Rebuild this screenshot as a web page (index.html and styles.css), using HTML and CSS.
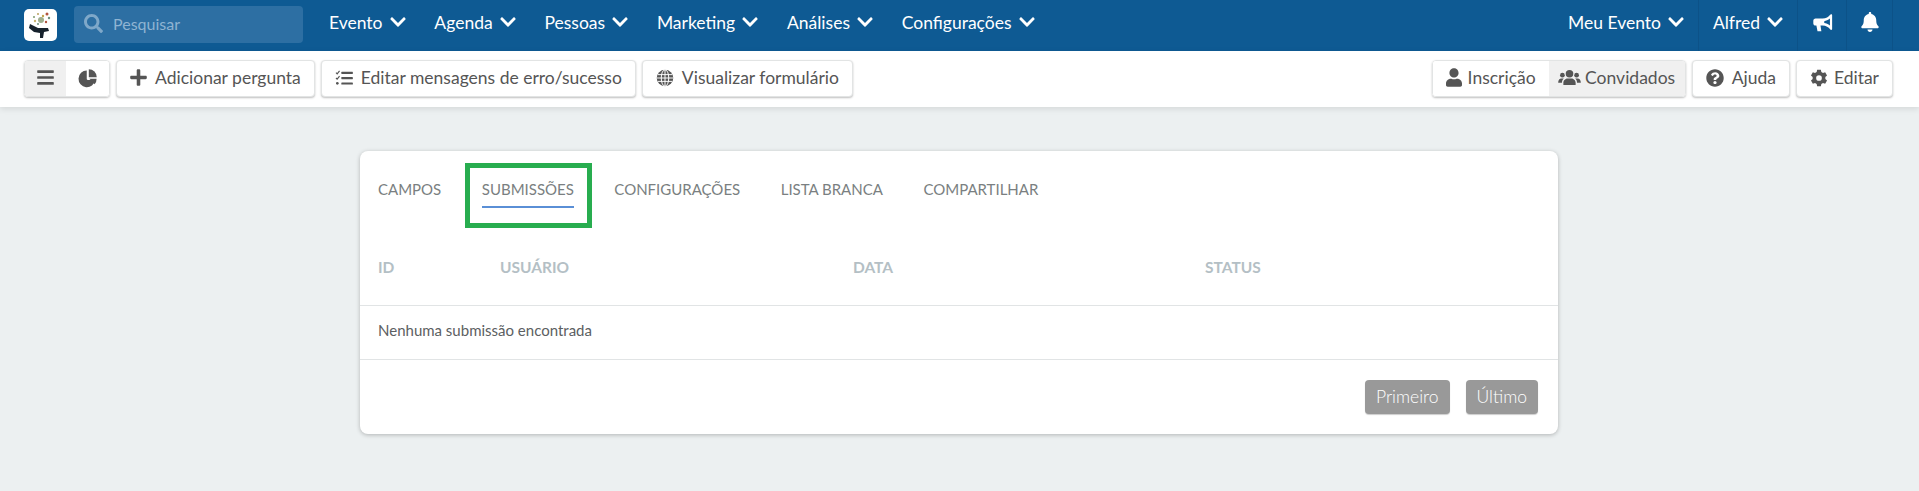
FILE: index.html
```html
<!DOCTYPE html>
<html lang="pt">
<head>
<meta charset="utf-8">
<title>Submissões</title>
<link rel="stylesheet" href="styles.css">
</head>
<body>
<svg class="defs" width="0" height="0" aria-hidden="true">
  <symbol id="chev" viewBox="0 0 448 512"><path d="M207.029 381.476L12.686 187.132c-9.373-9.373-9.373-24.569 0-33.941l22.667-22.667c9.357-9.357 24.522-9.375 33.901-.04L224 284.505l154.745-154.021c9.379-9.335 24.544-9.317 33.901.04l22.667 22.667c9.373 9.373 9.373 24.569 0 33.941L240.971 381.476c-9.373 9.372-24.569 9.372-33.942 0z"/></symbol>
</svg>
<header class="navbar">
  <div class="logo">
    <svg viewBox="0 0 33 32" width="33" height="32">
      <rect width="33" height="32" rx="5" fill="#fff"/>
      <circle cx="14" cy="5" r="1" fill="#b9a15c"/><circle cx="23" cy="5" r="1.5" fill="#b2533f"/><circle cx="10" cy="8" r="1" fill="#7d9a6b"/><circle cx="19" cy="7" r="1.2" fill="#c2a24b"/><circle cx="25" cy="9" r="1.2" fill="#6f8e7a"/><circle cx="11" cy="12" r="1.2" fill="#c9b270"/><circle cx="17" cy="11" r="3" fill="#9fae8e"/><circle cx="22" cy="13" r="1.2" fill="#b2533f"/><circle cx="14" cy="15" r="1" fill="#6f8e7a"/>
      <path d="M6 15l8 4 10 0 1 3-5 1-1 6-3 0 0-5-6-1-5-4z" fill="#16212c"/>
    </svg>
  </div>
  <div class="search">
    <svg class="search-icon" viewBox="0 0 512 512" width="19" height="19"><path d="M505 442.7L405.3 343c-4.5-4.5-10.6-7-17-7H372c27.6-35.3 44-79.7 44-128C416 93.1 322.9 0 208 0S0 93.1 0 208s93.1 208 208 208c48.3 0 92.7-16.4 128-44v16.3c0 6.4 2.5 12.5 7 17l99.7 99.7c9.4 9.4 24.6 9.4 33.9 0l28.3-28.3c9.4-9.4 9.4-24.6.1-34zM208 336c-70.7 0-128-57.2-128-128 0-70.7 57.2-128 128-128 70.7 0 128 57.2 128 128 0 70.7-57.2 128-128 128z"/></svg>
    <span>Pesquisar</span>
  </div>
  <nav class="menu">
    <a class="menu-item">Evento <svg class="chev"><use href="#chev"/></svg></a>
    <a class="menu-item">Agenda <svg class="chev"><use href="#chev"/></svg></a>
    <a class="menu-item">Pessoas <svg class="chev"><use href="#chev"/></svg></a>
    <a class="menu-item">Marketing <svg class="chev"><use href="#chev"/></svg></a>
    <a class="menu-item">Análises <svg class="chev"><use href="#chev"/></svg></a>
    <a class="menu-item">Configurações <svg class="chev"><use href="#chev"/></svg></a>
  </nav>
  <div class="nav-right">
    <a class="right-item w-event">Meu Evento <svg class="chev"><use href="#chev"/></svg></a>
    <a class="right-item w-user">Alfred <svg class="chev"><use href="#chev"/></svg></a>
    <a class="right-item w-horn">
      <svg viewBox="0 0 24 24" width="21" height="21" class="nav-icon"><path d="M22 2.5c-.6 0-1 .3-1.300.7C19 5.500 16 7.500 12 7.500H4c-1.400 0-2.500 1.100-2.500 2.500v3c0 1.400 1.100 2.500 2.500 2.500h1l1.300 6.500h4.400L9.700 15.500H12c4 0 7 2 8.700 4.300.3.400.7.700 1.300.700.800 0 1-.7 1-1.300V3.800c0-.6-.2-1.300-1-1.300zM20.500 15.500C18.500 13.800 16 12.800 14 12.500v-2c2-.3 4.500-1.300 6.500-3z"/></svg>
    </a>
    <a class="right-item w-bell">
      <svg viewBox="0 0 448 512" width="18" height="20" class="nav-icon"><path d="M224 512c35.320 0 63.970-28.650 63.970-64H160.030c0 35.350 28.650 64 63.970 64zm215.390-149.710c-19.320-20.760-55.470-51.990-55.470-154.290 0-77.700-54.480-139.900-127.940-155.160V32c0-17.670-14.320-32-31.980-32s-31.980 14.330-31.980 32v20.840C118.560 68.100 64.080 130.300 64.080 208c0 102.300-36.150 133.530-55.470 154.290-6 6.450-8.660 14.160-8.610 21.710.110 16.400 12.980 32 32.100 32h383.800c19.120 0 32-15.600 32.100-32 .050-7.550-2.610-15.270-8.610-21.710z"/></svg>
    </a>
  </div>
</header>

<div class="toolbar">
  <div class="group">
    <button class="btn btn-icon active">
      <svg viewBox="0 0 448 512" width="17" height="19"><path d="M16 132h416c8.837 0 16-7.163 16-16V76c0-8.837-7.163-16-16-16H16C7.163 60 0 67.163 0 76v40c0 8.837 7.163 16 16 16zm0 160h416c8.837 0 16-7.163 16-16v-40c0-8.837-7.163-16-16-16H16c-8.837 0-16 7.163-16 16v40c0 8.837 7.163 16 16 16zm0 160h416c8.837 0 16-7.163 16-16v-40c0-8.837-7.163-16-16-16H16c-8.837 0-16 7.163-16 16v40c0 8.837 7.163 16 16 16z"/></svg>
    </button>
    <button class="btn btn-icon">
      <svg viewBox="0 0 24 24" width="20" height="20"><path d="M10.500 3A10 10 0 1 0 20.500 14.500h-9l-1-1z"/><path d="M13 1.500v9.500h9.500A9.500 9.500 0 0 0 13 1.500z"/><path d="M13.500 13l6.500 6.500a9.500 9.500 0 0 0 2.300-6.500z"/></svg>
    </button>
  </div>
  <button class="btn single wide-gap">
    <svg viewBox="0 0 448 512" width="17" height="19"><path d="M416 208H272V64c0-17.670-14.330-32-32-32h-32c-17.670 0-32 14.330-32 32v144H32c-17.670 0-32 14.330-32 32v32c0 17.670 14.330 32 32 32h144v144c0 17.670 14.330 32 32 32h32c17.670 0 32-14.330 32-32V304h144c17.670 0 32-14.330 32-32v-32c0-17.670-14.330-32-32-32z"/></svg>
    Adicionar pergunta
  </button>
  <button class="btn single wide-gap">
    <svg viewBox="0 0 20 18" width="18" height="16"><rect x="7" y="2" width="13" height="2.400" rx=".5"/><rect x="7" y="8" width="13" height="2.400" rx=".5"/><rect x="7" y="14" width="13" height="2.400" rx=".5"/><path d="M1 3l1.300 1.300L5 1M1 9l1.300 1.300L5 7" fill="none" stroke="#555" stroke-width="1.300"/><circle cx="2.500" cy="15" r="1.500"/></svg>
    Editar mensagens de erro/sucesso
  </button>
  <button class="btn single wide-gap">
    <svg viewBox="0 0 24 24" width="18" height="18"><circle cx="12" cy="12" r="11"/><path d="M12 1v22M1 12h22M2.500 7.500h19M2.500 16.500h19" stroke="#fff" stroke-width="1.300" fill="none"/><ellipse cx="12" cy="12" rx="5" ry="11" fill="none" stroke="#fff" stroke-width="1.300"/></svg>
    Visualizar formulário
  </button>
  <div class="spacer"></div>
  <div class="group">
    <button class="btn tab-a">
      <svg viewBox="0 0 448 512" width="16" height="19"><path d="M224 256c70.700 0 128-57.300 128-128S294.700 0 224 0 96 57.300 96 128s57.300 128 128 128zm89.600 32h-16.700c-22.200 10.200-46.900 16-72.900 16s-50.600-5.800-72.900-16h-16.700C60.200 288 0 348.200 0 422.400V464c0 26.500 21.500 48 48 48h352c26.500 0 48-21.500 48-48v-41.600c0-74.200-60.200-134.400-134.400-134.400z"/></svg>
      Inscrição
    </button>
    <button class="btn tab-b active">
      <svg viewBox="0 0 24 18" width="23" height="17"><circle cx="12" cy="5" r="4"/><circle cx="4.500" cy="6.500" r="2.500"/><circle cx="19.500" cy="6.500" r="2.500"/><path d="M5.500 17v-2.500C5.500 12 8 10 10 10h4c2 0 4.500 2 4.500 4.500V17zM0 14.500C0 11.500 1.500 10 3.500 10H6c-1.200 1-2 2.700-2 4.500H0zM24 14.500c0-3-1.500-4.500-3.500-4.500H18c1.200 1 2 2.700 2 4.500h4z"/></svg>
      Convidados
    </button>
  </div>
  <button class="btn single wide-gap">
    <svg viewBox="0 0 512 512" width="18" height="18"><path d="M504 256c0 136.997-111.043 248-248 248S8 392.997 8 256C8 119.083 119.043 8 256 8s248 111.083 248 248zM262.655 90c-54.497 0-89.255 22.957-116.549 63.758-3.536 5.286-2.353 12.415 2.715 16.258l34.699 26.310c5.205 3.947 12.621 3.008 16.665-2.122 17.864-22.658 30.113-35.797 57.303-35.797 20.429 0 45.698 13.148 45.698 32.958 0 14.976-12.363 22.667-32.534 33.976C247.128 238.528 216 254.941 216 296v4c0 6.627 5.373 12 12 12h56c6.627 0 12-5.373 12-12v-1.333c0-28.462 83.186-29.647 83.186-106.667 0-58.002-60.165-102-116.531-102zM256 338c-25.365 0-46 20.635-46 46 0 25.364 20.635 46 46 46s46-20.636 46-46c0-25.365-20.635-46-46-46z"/></svg>
    Ajuda
  </button>
  <button class="btn single">
    <svg viewBox="0 0 24 24" width="18" height="18"><path fill-rule="evenodd" d="M9.500 1h5l.6 3a8.500 8.500 0 0 1 2.200 1.300l2.900-1 2.500 4.300-2.300 2a8.500 8.500 0 0 1 0 2.800l2.300 2-2.500 4.300-2.900-1a8.500 8.500 0 0 1-2.200 1.300l-.6 3h-5l-.6-3a8.500 8.500 0 0 1-2.200-1.300l-2.900 1-2.500-4.300 2.300-2a8.500 8.500 0 0 1 0-2.800l-2.300-2 2.500-4.300 2.900 1A8.500 8.500 0 0 1 8.900 4zM12 8.200a3.800 3.800 0 1 0 0 7.600 3.800 3.800 0 0 0 0-7.600z"/></svg>
    Editar
  </button>
</div>

<main class="card">
  <div class="tabs">
    <a class="tab">CAMPOS</a>
    <a class="tab current">SUBMISSÕES<span class="highlight"></span></a>
    <a class="tab">CONFIGURAÇÕES</a>
    <a class="tab">LISTA BRANCA</a>
    <a class="tab">COMPARTILHAR</a>
  </div>
  <div class="thead">
    <div class="th">ID</div>
    <div class="th">USUÁRIO</div>
    <div class="th">DATA</div>
    <div class="th">STATUS</div>
  </div>
  <div class="empty">Nenhuma submissão encontrada</div>
  <div class="pager">
    <button class="page-btn">Primeiro</button>
    <button class="page-btn">Último</button>
  </div>
</main>
</body>
</html>
```
FILE: styles.css
```css
* { box-sizing: border-box; }
html, body { margin: 0; padding: 0; }
body {
  background: #ecf0f1;
  font-family: Lato, "Open Sans", sans-serif;
  color: #555;
  height: 491px;
  overflow: hidden;
}
.defs { position: absolute; }

.navbar {
  height: 51px;
  background: #0e5a93;
  display: flex;
  align-items: center;
  padding-left: 24px;
  color: #fff;
  font-size: 17.5px;
}
.logo { width: 33px; height: 32px; margin-top: -2px; }
.logo svg { display: block; }
.search {
  width: 229px;
  height: 37px;
  margin: -2px 0 0 17px;
  border-radius: 4px;
  background: #2d6fa3;
  display: flex;
  align-items: center;
  gap: 10px;
  padding: 0 0 2px 10px;
  color: #8fb4d2;
  font-size: 16px;
}
.search-icon { fill: #7fa8c9; }
.menu { display: flex; gap: 28.8px; margin-left: 26px; padding-bottom: 7px; }
.menu-item, .right-item { display: flex; align-items: center; gap: 7px; white-space: nowrap; }
.chev { width: 16px; height: 18px; fill: #fff; }
.nav-right { margin-left: auto; display: flex; height: 51px; margin-right: 26px; }
.right-item { justify-content: center; border-right: 1px solid #0c5288; padding-bottom: 7px; }
.w-event { padding-right: 14px; }
.w-user { width: 99px; }
.w-horn { width: 49px; }
.w-bell { width: 46px; }
.nav-icon { fill: #fff; }

.toolbar {
  height: 56px;
  background: #fff;
  display: flex;
  align-items: center;
  gap: 6px;
  padding: 0 26px 2px 24px;
  box-shadow: 0 2px 6px rgba(0, 0, 0, .1);
}
.spacer { flex: 1; }
.group {
  display: flex;
  height: 37px;
  border: 1px solid #e2e4e4;
  border-radius: 4px;
  box-shadow: 0 1px 2px rgba(0, 0, 0, .25);
  overflow: hidden;
}
.btn {
  height: 37px;
  background: #fff;
  border: 0;
  font-family: inherit;
  font-size: 17.5px;
  color: #555;
  display: flex;
  align-items: center;
  gap: 6px;
  white-space: nowrap;
  padding: 0 0 1px;
}
.btn svg { fill: #555; flex: none; }
.group .btn { height: 35px; }
.btn.active { background: #f0f0f0; }
.btn-icon { width: 42px; justify-content: center; }
.btn-icon.active { border-right: 1px solid #fff; }
.tab-a { width: 116px; justify-content: center; }
.tab-b { width: 136px; justify-content: center; gap: 4px; }
.single {
  padding: 0 13px 1px;
  border: 1px solid #e2e4e4;
  border-radius: 4px;
  box-shadow: 0 1px 2px rgba(0, 0, 0, .25);
}
.wide-gap { gap: 8px; }

.card {
  width: 1198px;
  height: 283px;
  margin: 44px 0 0 360px;
  background: #fff;
  border-radius: 8px;
  box-shadow: 0 1px 4px rgba(0, 0, 0, .25);
}
.tabs {
  display: flex;
  gap: 40.5px;
  padding: 27px 18px 0;
  height: 78px;
}
.tab {
  position: relative;
  height: 30px;
  line-height: 22px;
  font-size: 15px;
  color: #7a7f81;
  white-space: nowrap;
}
.current { border-bottom: 2px solid #5a8fd6; }
.highlight {
  position: absolute;
  left: -17px;
  right: -18px;
  top: -15px;
  height: 65px;
  border: 5px solid #28ad4f;
}
.thead {
  display: grid;
  grid-template-columns: 122px 353px 352px 1fr;
  height: 77px;
  padding: 27px 18px 0;
  border-bottom: 1px solid #e1e4e5;
}
.th {
  font-size: 15.5px;
  font-weight: 700;
  line-height: 22px;
  color: #b4bfc5;
}
.empty {
  height: 54px;
  line-height: 49px;
  padding-left: 18px;
  font-size: 15px;
  color: #5c6062;
  border-bottom: 1px solid #e1e4e5;
}
.pager {
  display: flex;
  justify-content: flex-end;
  gap: 16px;
  padding: 20px 20px 0 0;
}
.page-btn {
  height: 34px;
  padding: 0 11px 2px;
  border: 0;
  border-radius: 4px;
  background: #999;
  color: #fff;
  font-family: inherit;
  font-size: 17.5px;
  font-weight: 300;
  box-shadow: 0 1px 1px rgba(0, 0, 0, .2);
}
```
